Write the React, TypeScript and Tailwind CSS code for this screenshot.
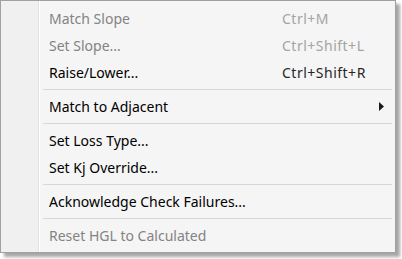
type Item =
  | { kind: "item"; label: string; shortcut?: string; disabled?: boolean; submenu?: boolean }
  | { kind: "sep" };

const items: Item[] = [
  { kind: "item", label: "Match Slope", shortcut: "Ctrl+M", disabled: true },
  { kind: "item", label: "Set Slope...", shortcut: "Ctrl+Shift+L", disabled: true },
  { kind: "item", label: "Raise/Lower...", shortcut: "Ctrl+Shift+R" },
  { kind: "sep" },
  { kind: "item", label: "Match to Adjacent", submenu: true },
  { kind: "sep" },
  { kind: "item", label: "Set Loss Type..." },
  { kind: "item", label: "Set Kj Override..." },
  { kind: "sep" },
  { kind: "item", label: "Acknowledge Check Failures..." },
  { kind: "sep" },
  { kind: "item", label: "Reset HGL to Calculated", disabled: true },
];

function Row({ label, shortcut, disabled, submenu }: { label: string; shortcut?: string; disabled?: boolean; submenu?: boolean }) {
  return (
    <div className="flex items-center h-[27px] pl-[9px] text-[14px] leading-[27px]">
      <span className={`w-[233px] shrink-0 ${disabled ? "text-[#838383]" : "text-black"}`}>{label}</span>
      <span className={`flex-1 tracking-[0.5px] ${disabled ? "text-[#a3a3a3]" : "text-[#262626]"}`}>{shortcut}</span>
      {submenu && (
        <svg width="5" height="9" viewBox="0 0 5 9" className="mr-[11px]">
          <path d="M0 0 L5 4.5 L0 9 Z" fill="#1a1a1a" />
        </svg>
      )}
    </div>
  );
}

export default function App() {
  return (
    <div className="w-[402px] h-[259px] bg-white" style={{ fontFamily: '"Noto Sans", "Open Sans", sans-serif' }}>
      <div className="flex w-[396px] h-[253px] border border-[#a0a0a0] bg-[#f5f5f5] shadow-[4px_4px_3px_rgba(0,0,0,0.35)]">
        {/* icon gutter */}
        <div className="w-[38px] shrink-0 bg-[#f0f0f0] border-r border-[#e2e2e2]" />
        <div className="w-px shrink-0 bg-white" />
        <div className="flex-1 flex flex-col pt-[4px]">
          {items.map((it, i) =>
            it.kind === "sep" ? (
              <div key={i} className="h-[7px] flex items-center ml-[3px] mr-[3px]">
                <div className="h-px w-full bg-[#d7d7d7]" />
              </div>
            ) : (
              <Row key={i} {...it} />
            )
          )}
        </div>
      </div>
    </div>
  );
}
